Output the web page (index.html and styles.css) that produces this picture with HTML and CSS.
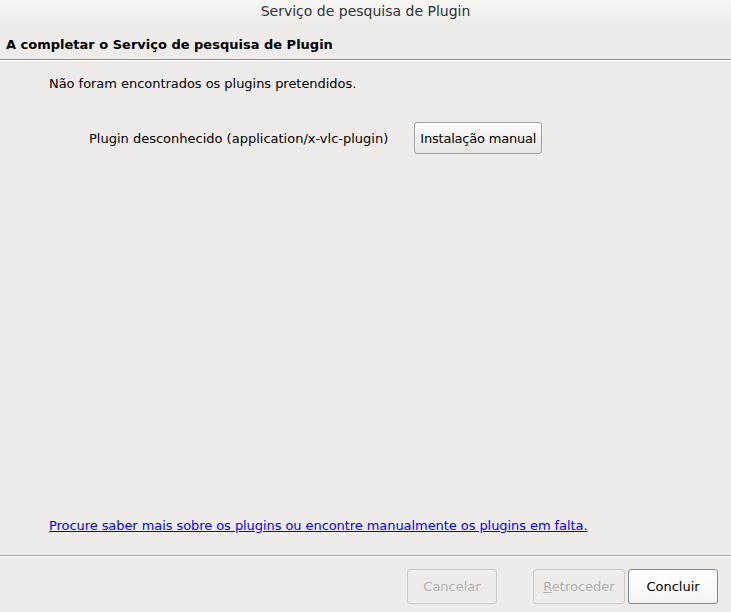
FILE: index.html
```html
<!DOCTYPE html>
<html>
<head>
<meta charset="utf-8">
<link rel="stylesheet" href="styles.css">
</head>
<body>
<div class="window">
  <div class="titlebar">Serviço de pesquisa de Plugin</div>
  <div class="header">A completar o Serviço de pesquisa de Plugin</div>
  <div class="content">
    <p class="msg">Não foram encontrados os plugins pretendidos.</p>
    <div class="plugin-row">
      <span class="plugin-name">Plugin desconhecido (application/x-vlc-plugin)</span>
      <button class="btn manual">Instalação manual</button>
    </div>
    <div class="spacer"></div>
    <a class="link" href="#">Procure saber mais sobre os plugins ou encontre manualmente os plugins em falta.</a>
  </div>
  <div class="footer">
    <button class="btn wide disabled">Cancelar</button>
    <button class="btn wide disabled back"><u>R</u>etroceder</button>
    <button class="btn wide default">Concluir</button>
  </div>
</div>
</body>
</html>
```
FILE: styles.css
```css
html, body {
  margin: 0;
  padding: 0;
  background: #edeceb;
}
body {
  font-family: "DejaVu Sans", sans-serif;
  font-size: 13px;
  color: #2e3436;
}
.window {
  width: 731px;
  height: 612px;
  display: flex;
  flex-direction: column;
  background: #edeceb;
}
.titlebar {
  height: 23px;
  line-height: 22px;
  text-align: center;
  color: #2e3436;
  background: linear-gradient(#f6f6f5, #edeceb);
  font-size: 14px;
}
.header {
  height: 37px;
  box-sizing: border-box;
  padding: 14px 0 0 6px;
  font-weight: bold;
  color: #000;
  border-bottom: 1px solid #8e8e8c;
  box-shadow: 0 1px 0 #ffffff;
}
.content {
  flex: 1;
  display: flex;
  flex-direction: column;
  padding: 16px 0 0 49px;
  border-bottom: 1px solid #a6a6a4;
  box-shadow: 0 1px 0 #ffffff;
}
.msg {
  margin: 0;
  color: #000;
  line-height: 16px;
  letter-spacing: -0.04px;
}
.plugin-row {
  display: flex;
  align-items: center;
  margin-top: 30px;
  padding-left: 40px;
}
.plugin-name {
  color: #000;
}
.btn {
  font-family: "DejaVu Sans", sans-serif;
  font-size: 13px;
  color: #000;
  background: linear-gradient(#fdfdfd, #e6e6e5);
  border: 1px solid #a3a3a1;
  border-radius: 3px;
  height: 32px;
  padding: 0 6px;
  margin-left: 26px;
  cursor: default;
}
.manual {
  padding: 0 3px;
  width: 128px;
  letter-spacing: -0.2px;
}
.spacer {
  flex: 1;
}
.link {
  color: #0000ff;
  text-decoration: underline;
  margin-bottom: 21px;
  line-height: 16px;
  letter-spacing: -0.07px;
}
.footer {
  height: 56px;
  box-sizing: border-box;
  display: flex;
  justify-content: flex-end;
  align-items: flex-start;
  padding: 13px 13px 0 0;
}
.footer .btn {
  height: 35px;
  margin-left: 0;
}
.wide {
  width: 90px;
}
.disabled {
  color: #b0b0ae;
  background: #edeceb;
  border-color: #cbcbc9;
}
.disabled u {
  text-decoration-color: #b0b0ae;
}
.back {
  margin-left: 36px !important;
  width: 92px;
}
.default {
  margin-left: 3px !important;
  border-color: #7189aa;
  background: linear-gradient(#ffffff, #f4f4f3);
}
```
